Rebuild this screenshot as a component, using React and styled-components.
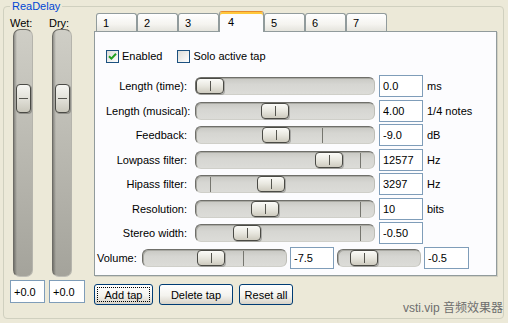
import React from 'react';
import styled, { createGlobalStyle } from 'styled-components';

const GlobalStyle = createGlobalStyle`
  html, body {
    margin: 0;
    padding: 0;
    background: #ece9d8;
  }
  body {
    font-family: "Liberation Sans", Arial, sans-serif;
    font-size: 11px;
    color: #000;
  }
`;

const Window = styled.div`
  position: relative;
  width: 508px;
  height: 323px;
  box-sizing: border-box;
  padding: 6px 0 0 3px;
  background: #ece9d8;
  overflow: hidden;
`;

const GroupBox = styled.div`
  position: relative;
  box-sizing: border-box;
  width: 501px;
  height: 313px;
  border: 1px solid #d0d0bf;
  border-radius: 4px;
  padding: 4px 5px 0 6px;
  display: flex;
  gap: 9px;
`;

// caption sits over the group border, like a legend
const GroupTitle = styled.div`
  position: absolute;
  top: -7px;
  left: 6px;
  padding: 0 2px;
  background: #ece9d8;
  color: #0046d5;
  line-height: 13px;
`;

/* ---------- left faders ---------- */

const Faders = styled.div`
  display: flex;
  gap: 4px;
  width: 75px;
`;

const Channel = styled.div`
  display: flex;
  flex-direction: column;
  width: ${p => p.$w}px;
`;

const ChannelLabel = styled.div`
  margin-top: 6px;
  height: 12px;
  line-height: 12px;
`;

const VTrack = styled.div`
  position: relative;
  box-sizing: border-box;
  margin-left: 3px;
  width: 20px;
  height: 248px;
  border-radius: 7px;
  border: 1px solid;
  border-color: #6d6c66 #b5b4ac #bebdb5 #6d6c66;
  background:
    linear-gradient(to right, rgba(0, 0, 0, 0.3), rgba(0, 0, 0, 0) 3px),
    linear-gradient(#cfcec6, #a4a39b);
`;

const VThumb = styled.div`
  position: absolute;
  left: 2px;
  box-sizing: border-box;
  width: 15px;
  height: 29px;
  border: 1px solid #4a4a45;
  border-radius: 4px;
  background: linear-gradient(#f6f6f2, #e2e1d9 50%, #c9c7bb);
  box-shadow: 1px 1px 0 rgba(0, 0, 0, 0.25);

  &::after {
    content: "";
    position: absolute;
    left: 2px;
    right: 2px;
    top: 13px;
    height: 1px;
    background: #55554f;
  }
`;

const ValueBox = styled.input`
  box-sizing: border-box;
  margin-top: 3px;
  width: 100%;
  height: 23px;
  border: 1px solid #7f9db9;
  background: #fff;
  padding: 0 0 0 3px;
  font: inherit;
  color: #000;
  outline: none;
`;

/* ---------- tabs ---------- */

const Main = styled.div`
  display: flex;
  flex-direction: column;
  width: 403px;
`;

const TabStrip = styled.div`
  position: relative;
  z-index: 1;
  display: flex;
  align-items: flex-end;
  height: 20px;
  padding-left: 2px;
`;

const Tab = styled.div`
  box-sizing: border-box;
  width: ${p => (p.$active ? 45 : 41)}px;
  height: ${p => (p.$active ? 21 : 18)}px;
  margin-bottom: ${p => (p.$active ? -1 : 0)}px;
  padding-left: ${p => (p.$active ? 8 : 6)}px;
  line-height: ${p => (p.$active ? 20 : 18)}px;
  border: 1px solid #919b9c;
  border-bottom: none;
  border-radius: 3px 3px 0 0;
  border-top-color: ${p => (p.$active ? '#e68b2c' : '#919b9c')};
  background: ${p =>
    p.$active ? '#fcfcfe' : 'linear-gradient(#ffffff, #f5f4f0 60%, #e5e4dd)'};
  box-shadow: ${p => (p.$active ? 'inset 0 2px 0 #ffc83c' : 'none')};
`;

const Panel = styled.div`
  box-sizing: border-box;
  height: 245px;
  border: 1px solid #919b9c;
  background: #fcfcfe;
  padding-top: 18px;
  box-shadow: 1px 1px 0 #d2d0c2;
`;

const CheckRow = styled.div`
  display: flex;
  align-items: center;
  gap: 15px;
  margin-left: 11px;
  height: 13px;
`;

const CheckItem = styled.label`
  display: flex;
  align-items: center;
  gap: 3px;
  line-height: 13px;
`;

const CheckBox = styled.span`
  display: flex;
  align-items: center;
  justify-content: center;
  box-sizing: border-box;
  width: 13px;
  height: 13px;
  border: 1px solid #1c5180;
  background: linear-gradient(135deg, #dcdcd7, #ffffff);
`;

const ParamGrid = styled.div`
  display: grid;
  grid-template-columns: 85px 180px 44px 1fr;
  grid-auto-rows: 22px;
  column-gap: 4px;
  row-gap: 2.5px;
  align-items: center;
  margin: 12px 0 0 11px;
`;

const ParamLabel = styled.div`
  padding-right: 4px;
  text-align: right;
  white-space: nowrap;
`;

const Unit = styled.div`
  white-space: nowrap;
`;

const Field = styled.input`
  box-sizing: border-box;
  width: ${p => p.$w}px;
  height: 22px;
  border: 1px solid #7f9db9;
  background: #fff;
  padding: 0 0 0 3px;
  font: inherit;
  color: #000;
  outline: none;
`;

const HTrack = styled.div`
  position: relative;
  box-sizing: border-box;
  width: ${p => p.$w}px;
  height: 18px;
  border-radius: 6px;
  border: 1px solid;
  border-color: #6f6f6a #bdbdb6 #cfcfc9 #6f6f6a;
  background: linear-gradient(#c8c8c3, #d6d6d2 40%, #dcdcd8);
  box-shadow: inset 1px 1px 0 #a9a9a3;
`;

const HTick = styled.div`
  position: absolute;
  top: 1px;
  bottom: 0;
  width: 1px;
  background: #76766f;
`;

const HThumb = styled.div`
  position: absolute;
  top: 0;
  box-sizing: border-box;
  width: 28px;
  height: 16px;
  border: 1px solid #4a4a45;
  border-radius: 4px;
  background: linear-gradient(#fbfbf8, #e8e7df 50%, #cecbbf);
  box-shadow: 1px 1px 0 rgba(0, 0, 0, 0.22);

  &::after {
    content: "";
    position: absolute;
    left: 13px;
    top: 2px;
    bottom: 2px;
    width: 1px;
    background: #55554f;
  }
`;

const VolumeRow = styled.div`
  display: flex;
  align-items: center;
  gap: 3px;
  height: 22px;
  margin: 2.5px 0 0 2px;
`;

const VolumeLabel = styled.div`
  width: 42px;
`;

/* ---------- buttons ---------- */

const ButtonRow = styled.div`
  display: flex;
  gap: 6px;
  margin-top: 8px;
`;

const Button = styled.button`
  box-sizing: border-box;
  width: ${p => p.$w}px;
  height: 21px;
  padding: 0;
  border: 1px solid #003c74;
  border-radius: 3px;
  background: linear-gradient(#ffffff, #f4f3ee 55%, #d8d3c8);
  font: inherit;
  font-size: 11px;
  color: #000;
  outline: ${p => (p.$focused ? '1px dotted #000' : 'none')};
  outline-offset: -4px;
`;

const Watermark = styled.div`
  position: absolute;
  right: 5px;
  bottom: 7px;
  font-family: "Liberation Sans", "Noto Sans CJK SC", sans-serif;
  font-size: 12px;
  line-height: 15px;
  color: #6e6e6e;
`;

/* ---------- pieces ---------- */

const Check = () => (
  <svg width="9" height="9" viewBox="0 0 9 9">
    <path d="M1 4.2 L3.4 6.6 L8 1.8" fill="none" stroke="#21a121" strokeWidth="2" />
  </svg>
);

const HSlider = ({ w, pos, tick }) => {
  const inner = w - 2;
  const range = inner - 28;
  return (
    <HTrack $w={w}>
      {tick != null && <HTick style={{ left: Math.round(14 + tick * range) }} />}
      <HThumb style={{ left: Math.round(pos * range) }} />
    </HTrack>
  );
};

const params = [
  { label: 'Length (time):', pos: 0, tick: null, value: '0.0', unit: 'ms' },
  { label: 'Length (musical):', pos: 0.433, tick: null, value: '4.00', unit: '1/4 notes' },
  { label: 'Feedback:', pos: 0.44, tick: 0.747, value: '-9.0', unit: 'dB' },
  { label: 'Lowpass filter:', pos: 0.793, tick: 1, value: '12577', unit: 'Hz' },
  { label: 'Hipass filter:', pos: 0.407, tick: 0, value: '3297', unit: 'Hz' },
  { label: 'Resolution:', pos: 0.367, tick: 1, value: '10', unit: 'bits' },
  { label: 'Stereo width:', pos: 0.247, tick: 1, value: '-0.50', unit: '' },
];

const tabs = ['1', '2', '3', '4', '5', '6', '7'];

const App = () => {
  return (
    <>
      <GlobalStyle />
      <Window>
        <GroupBox>
          <GroupTitle>ReaDelay</GroupTitle>

          <Faders>
            <Channel $w={35}>
              <ChannelLabel>Wet:</ChannelLabel>
              <VTrack>
                <VThumb style={{ top: 54 }} />
              </VTrack>
              <ValueBox readOnly value="+0.0" />
            </Channel>
            <Channel $w={36}>
              <ChannelLabel>Dry:</ChannelLabel>
              <VTrack>
                <VThumb style={{ top: 54 }} />
              </VTrack>
              <ValueBox readOnly value="+0.0" />
            </Channel>
          </Faders>

          <Main>
            <TabStrip>
              {tabs.map(t => (
                <Tab key={t} $active={t === '4'}>{t}</Tab>
              ))}
            </TabStrip>

            <Panel>
              <CheckRow>
                <CheckItem>
                  <CheckBox><Check /></CheckBox>
                  Enabled
                </CheckItem>
                <CheckItem>
                  <CheckBox />
                  Solo active tap
                </CheckItem>
              </CheckRow>

              <ParamGrid>
                {params.map(p => (
                  <React.Fragment key={p.label}>
                    <ParamLabel>{p.label}</ParamLabel>
                    <HSlider w={180} pos={p.pos} tick={p.tick} />
                    <Field $w={44} readOnly value={p.value} />
                    <Unit>{p.unit}</Unit>
                  </React.Fragment>
                ))}
              </ParamGrid>

              <VolumeRow>
                <VolumeLabel>Volume:</VolumeLabel>
                <HSlider w={145} pos={0.47} tick={0.748} />
                <Field $w={44} readOnly value="-7.5" />
                <HSlider w={84} pos={0.22} tick={null} />
                <Field $w={45} readOnly value="-0.5" />
              </VolumeRow>
            </Panel>

            <ButtonRow>
              <Button $w={59} $focused>Add tap</Button>
              <Button $w={74}>Delete tap</Button>
              <Button $w={54}>Reset all</Button>
            </ButtonRow>
          </Main>
        </GroupBox>
        <Watermark>vsti.vip 音频效果器</Watermark>
      </Window>
    </>
  );
};

export default App;
